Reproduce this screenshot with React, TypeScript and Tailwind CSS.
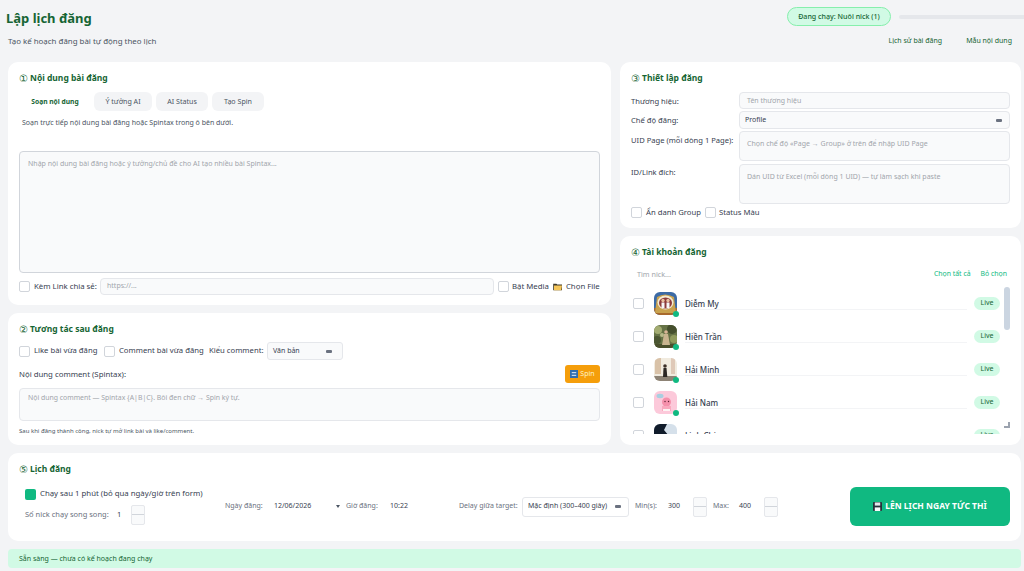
import type { ReactNode } from "react";

const font = { fontFamily: '"Noto Sans", "Open Sans", sans-serif' };

function Check({ className = "" }: { className?: string }) {
  return <span className={`block h-[11px] w-[11px] shrink-0 rounded-[2px] border border-[#d1d5db] bg-white ${className}`} />;
}

function Heading({ num, children }: { num: string; children: ReactNode }) {
  return (
    <h2 className="flex h-[12px] items-center text-[8.5px] leading-[12px] font-bold text-[#166534]">
      <span className="w-[11px] shrink-0 text-[10px] font-normal">{num}</span>
      {children}
    </h2>
  );
}

function SelectMark() {
  return <span className="block h-[3px] w-[6px] shrink-0 rounded-[1px] bg-[#6b7280]" />;
}

function Stepper({ className = "" }: { className?: string }) {
  return (
    <span className={`flex h-[20px] w-[14px] shrink-0 flex-col overflow-hidden rounded-[2px] border border-[#e5e7eb] bg-[#f9fafb] ${className}`}>
      <span className="flex-1 border-b border-[#d1d5db]" />
      <span className="flex-1" />
    </span>
  );
}

function Field({ label, children }: { label: string; children: ReactNode }) {
  return (
    <div className="flex">
      <span className="w-[108px] shrink-0 pt-[3px] text-[7.6px] leading-[12px] whitespace-nowrap text-[#374151]">{label}</span>
      {children}
    </div>
  );
}

function Avatar1() {
  return (
    <svg viewBox="0 0 23 23" className="h-full w-full">
      <rect width="23" height="23" fill="#3c6aa5" />
      <rect y="16" width="23" height="7" fill="#a8692c" />
      <path d="M1 21 3 5q8-5 17 0l2 16z" fill="#c8a24f" />
      <ellipse cx="11.5" cy="10.5" rx="8" ry="7" fill="#f4ead2" />
      <ellipse cx="11.5" cy="11" rx="6.5" ry="5.5" fill="#8d3a3a" />
      <circle cx="9" cy="8.5" r="1.7" fill="#e8bfa0" />
      <circle cx="14" cy="8.5" r="1.7" fill="#e8bfa0" />
      <rect x="7.5" y="10.5" width="3" height="5.5" fill="#f7f7f7" />
      <rect x="12.5" y="10.5" width="3" height="5.5" fill="#f7f7f7" />
    </svg>
  );
}

function Avatar2() {
  return (
    <svg viewBox="0 0 23 23" className="h-full w-full">
      <rect width="23" height="23" fill="#667346" />
      <circle cx="4" cy="5" r="4" fill="#a3ac72" />
      <circle cx="18" cy="4" r="5" fill="#454f2d" />
      <circle cx="20" cy="14" r="4" fill="#8f9a5c" />
      <circle cx="3" cy="15" r="4" fill="#4b5632" />
      <circle cx="8" cy="10" r="2" fill="#b7bb8a" />
      <rect y="19" width="23" height="4" fill="#4a4f2c" />
      <circle cx="12" cy="7" r="1.8" fill="#d9b596" />
      <path d="M10 9h4l2 11H8z" fill="#c9b48f" />
    </svg>
  );
}

function Avatar3() {
  return (
    <svg viewBox="0 0 23 23" className="h-full w-full">
      <rect width="23" height="23" fill="#f1ebdf" />
      <rect x="1" width="6" height="16" fill="#d9c2a8" />
      <rect x="17" width="4" height="16" fill="#dfc9b8" />
      <rect y="18" width="23" height="5" fill="#8d8375" />
      <circle cx="11" cy="8" r="1.8" fill="#3d3028" />
      <path d="M9.5 10h3l.8 9H9z" fill="#2b2623" />
    </svg>
  );
}

function Avatar4() {
  return (
    <svg viewBox="0 0 23 23" className="h-full w-full">
      <rect width="23" height="23" fill="#fcc9da" />
      <ellipse cx="6" cy="5" rx="3.5" ry="2.2" fill="#a9cfe0" />
      <circle cx="12.5" cy="11" r="4.5" fill="#f590ab" />
      <path d="M8 15h9v5H8z" fill="#f9a9be" />
      <path d="M9 18h7v2H9z" fill="#fdf3f3" />
      <circle cx="11" cy="10.5" r=".7" fill="#5b2333" />
      <circle cx="14.5" cy="10.5" r=".7" fill="#5b2333" />
    </svg>
  );
}

function Avatar5() {
  return (
    <svg viewBox="0 0 23 23" className="h-full w-full">
      <rect width="23" height="23" fill="#d5e0ea" />
      <path d="M0 0h13l-3 6 5 6H0z" fill="#111c2b" />
      <path d="M0 12h23v11H0z" fill="#33414f" />
    </svg>
  );
}

const accounts = [
  { name: "Diễm My", avatar: <Avatar1 /> },
  { name: "Hiền Trần", avatar: <Avatar2 /> },
  { name: "Hải Minh", avatar: <Avatar3 /> },
  { name: "Hải Nam", avatar: <Avatar4 /> },
  { name: "Linh Chi", avatar: <Avatar5 /> },
];

export default function App() {
  return (
    <div style={font} className="h-[571px] w-[1024px] overflow-hidden bg-[#f3f4f6] text-[#374151]">
      {/* Header */}
      <div className="flex h-[62px] flex-col">
        <div className="flex items-start justify-between pl-[6px]">
          <h1 className="pt-[8px] text-[13px] leading-[20px] font-bold text-[#166534]">Lập lịch đăng</h1>
          <div className="flex items-center pt-[7px]">
            <span className="flex h-[19px] w-[104px] items-center justify-center rounded-full border border-[#86efac] bg-[#d1fae5] text-[7.1px] font-medium text-[#166534]">
              Đang chạy: Nuôi nick (1)
            </span>
            <span className="ml-[8px] h-[4px] w-[125px] rounded-l-full bg-[#e5e7eb]" />
          </div>
        </div>
        <div className="mt-[7px] flex items-center justify-between pr-[12px] pl-[8px]">
          <span className="text-[7.9px] leading-[12px] text-[#4b5563]">Tạo kế hoạch đăng bài tự động theo lịch</span>
          <div className="flex gap-[24px] text-[7px] leading-[12px] text-[#166534]">
            <span>Lịch sử bài đăng</span>
            <span>Mẫu nội dung</span>
          </div>
        </div>
      </div>

      {/* Top columns */}
      <div className="flex gap-[9px] pl-[8px]">
        <div className="flex w-[603px] flex-col gap-[8px]">
          <section className="h-[243px] rounded-[10px] bg-white pt-[10px] pr-[11px] pl-[11px]">
            <Heading num="①">Nội dung bài đăng</Heading>
            <div className="mt-[8px] flex gap-[4px] pl-[3px] text-[7.1px] leading-[19px] text-[#4b5563]">
              <span className="w-[66px] rounded-[6px] bg-white text-center text-[6.7px] font-bold text-[#166534]">Soạn nội dung</span>
              <span className="ml-[2px] w-[58px] rounded-[6px] bg-[#f3f4f6] text-center">Ý tưởng AI</span>
              <span className="w-[52px] rounded-[6px] bg-[#f3f4f6] text-center">AI Status</span>
              <span className="w-[52px] rounded-[6px] bg-[#f3f4f6] text-center">Tạo Spin</span>
            </div>
            <p className="mt-[7px] pl-[3px] text-[7px] leading-[10px] text-[#4b5563]">Soạn trực tiếp nội dung bài đăng hoặc Spintax trong ô bên dưới.</p>
            <div className="mt-[23px] h-[122px] rounded-[4px] border border-[#d1d5db] bg-[#f9fafb] px-[8px] py-[6px] text-[7px] leading-[11px] text-[#a1a5ab]">
              Nhập nội dung bài đăng hoặc ý tưởng/chủ đề cho AI tạo nhiều bài Spintax...
            </div>
            <div className="mt-[5px] flex items-center text-[7.8px] text-[#374151]">
              <Check />
              <span className="ml-[4px] w-[66px] whitespace-nowrap">Kèm Link chia sẻ:</span>
              <span className="flex h-[17px] w-[394px] items-center rounded-[4px] border border-[#e5e7eb] bg-[#f9fafb] px-[6px] text-[7px] text-[#a1a5ab]">https://...</span>
              <Check className="ml-[4px]" />
              <span className="ml-[3px] whitespace-nowrap">Bật Media</span>
              <svg viewBox="0 0 12 10" className="ml-[4px] h-[8px] w-[10px] shrink-0">
                <path d="M0 1h4l1 1h6v7H0z" fill="#3f3a2a" />
                <path d="M1 3h10l-1 6H1z" fill="#f5c65a" />
              </svg>
              <span className="ml-[3px] whitespace-nowrap">Chọn File</span>
            </div>
          </section>

          <section className="h-[132px] rounded-[10px] bg-white pt-[10px] pr-[11px] pl-[11px]">
            <Heading num="②">Tương tác sau đăng</Heading>
            <div className="mt-[7px] flex h-[18px] items-center text-[7.7px] whitespace-nowrap">
              <Check />
              <span className="ml-[4px] w-[66px]">Like bài vừa đăng</span>
              <Check className="ml-[4px]" />
              <span className="ml-[4px] w-[86px]">Comment bài vừa đăng</span>
              <span className="ml-[4px] w-[55px]">Kiểu comment:</span>
              <span className="ml-[3px] flex h-[18px] w-[76px] items-center justify-between rounded-[3px] border border-[#e5e7eb] bg-[#f9fafb] pr-[10px] pl-[5px] text-[7px]">
                Văn bản
                <SelectMark />
              </span>
            </div>
            <div className="mt-[5px] flex h-[18px] items-center justify-between">
              <span className="pt-[2px] text-[7.8px] text-[#374151]">Nội dung comment (Spintax):</span>
              <span className="flex h-[18px] w-[35px] items-center justify-center gap-[2px] rounded-[3px] bg-[#f59e0b] text-[7px] text-[#fef3c7]">
                <svg viewBox="0 0 9 9" className="h-[8px] w-[8px]">
                  <rect width="9" height="9" fill="#2f6db0" />
                  <path d="M2 3h5M2 6h5" stroke="#fff" strokeWidth="1" />
                </svg>
                Spin
              </span>
            </div>
            <div className="mt-[5px] h-[33px] rounded-[4px] border border-[#e5e7eb] bg-[#f9fafb] px-[8px] py-[3px] text-[6.9px] leading-[11px] text-[#a1a5ab]">
              Nội dung comment — Spintax {"{A|B|C}"}. Bôi đen chữ → Spin ký tự.
            </div>
            <p className="mt-[6px] text-[6px] leading-[8px] text-[#4b5563]">Sau khi đăng thành công, nick tự mở link bài và like/comment.</p>
          </section>
        </div>

        <div className="flex w-[401px] flex-col gap-[8px]">
          <section className="h-[166px] rounded-[10px] bg-white pt-[10px] pr-[11px] pl-[11px]">
            <Heading num="③">Thiết lập đăng</Heading>
            <div className="mt-[8px] flex flex-col gap-[2px]">
              <Field label="Thương hiệu:">
                <span className="flex h-[17px] flex-1 items-center rounded-[4px] border border-[#e5e7eb] bg-[#f9fafb] px-[7px] pt-[1px] text-[7px] text-[#a1a5ab]">Tên thương hiệu</span>
              </Field>
              <Field label="Chế độ đăng:">
                <span className="flex h-[18px] flex-1 items-center justify-between rounded-[4px] border border-[#e5e7eb] bg-[#f9fafb] pt-[1px] pr-[7px] pl-[5px] text-[7px] text-[#374151]">
                  Profile
                  <SelectMark />
                </span>
              </Field>
              <Field label="UID Page (mỗi dòng 1 Page):">
                <span className="h-[30px] flex-1 rounded-[4px] border border-[#e5e7eb] bg-[#f9fafb] px-[7px] py-[7px] text-[7px] leading-[10px] text-[#a1a5ab]">Chọn chế độ «Page → Group» ở trên để nhập UID Page</span>
              </Field>
              <Field label="ID/Link đích:">
                <span className="mt-[1px] h-[40px] flex-1 rounded-[4px] border border-[#e5e7eb] bg-[#f9fafb] px-[7px] py-[7px] text-[7px] leading-[10px] text-[#a1a5ab]">Dán UID từ Excel (mỗi dòng 1 UID) — tự làm sạch khi paste</span>
              </Field>
            </div>
            <div className="mt-[3px] flex items-center text-[7.7px] whitespace-nowrap">
              <Check />
              <span className="ml-[4px] w-[56px]">Ẩn danh Group</span>
              <Check className="ml-[3px]" />
              <span className="ml-[3px]">Status Màu</span>
            </div>
          </section>

          <section className="h-[209px] rounded-[10px] bg-white pt-[10px] pr-[11px] pl-[11px]">
            <Heading num="④">Tài khoản đăng</Heading>
            <div className="mt-[10px] flex items-center justify-between pr-[3px] pl-[6px] text-[7.2px] leading-[12px]">
              <span className="text-[#a1a5ab]">Tìm nick...</span>
              <span className="flex gap-[10px] text-[6.9px] text-[#10b981]">
                <span>Chọn tất cả</span>
                <span>Bỏ chọn</span>
              </span>
            </div>
            <div className="relative mt-[7px] h-[147px] overflow-hidden pr-[10px]">
              {accounts.map((a) => (
                <div key={a.name} className="flex h-[33px] items-center pl-[2px]">
                  <Check />
                  <div className="relative ml-[10px] h-[23px] w-[23px] shrink-0">
                    <div className="h-full w-full overflow-hidden rounded-[6px]">{a.avatar}</div>
                    <span className="absolute -right-[2px] -bottom-[2px] h-[6px] w-[6px] rounded-full bg-[#10b981]" />
                  </div>
                  <span className="mt-[1px] mr-[7px] ml-[8px] w-[16px] flex-1 border-b border-[#f3f4f6] text-[8px] leading-[10px] font-medium text-[#374151]">{a.name}</span>
                  <span className="flex h-[13px] w-[26px] items-center justify-center rounded-full bg-[#d1fae5] text-[7px] text-[#166534]">Live</span>
                </div>
              ))}
              <span className="absolute top-0 right-0 h-[43px] w-[6px] rounded-full bg-[#cbd5e1]" />
              <span className="absolute right-0 bottom-[6px] h-[6px] w-[6px] border-r-2 border-b-2 border-[#9ca3af]" />
            </div>
          </section>
        </div>
      </div>

      {/* Schedule */}
      <section className="mt-[8px] ml-[8px] h-[88px] w-[1013px] rounded-[10px] bg-white pt-[10px] pr-[11px] pl-[11px]">
        <Heading num="⑤">Lịch đăng</Heading>
        <div className="mt-[12px] flex h-[39px] items-center">
          <div className="w-[206px] shrink-0 pl-[6px]">
            <div className="flex items-center">
              <span className="h-[11px] w-[11px] rounded-[2px] bg-[#10b981]" />
              <span className="ml-[4px] text-[7.8px] whitespace-nowrap">Chạy sau 1 phút (bỏ qua ngày/giờ trên form)</span>
            </div>
            <div className="mt-[5px] flex items-center text-[7.5px] text-[#6b7280]">
              <span className="w-[84px] whitespace-nowrap">Số nick chạy song song:</span>
              <span className="ml-[8px] w-[14px] text-[#374151]">1</span>
              <Stepper />
            </div>
          </div>
          <div className="flex items-center text-[7px] whitespace-nowrap text-[#6b7280]">
            <span className="w-[38px]">Ngày đăng:</span>
            <span className="ml-[11px] w-[62px] text-[#374151]">12/06/2026</span>
            <span className="h-0 w-0 border-x-[2px] border-t-[3px] border-x-transparent border-t-[#4b5563]" />
            <span className="ml-[6px] w-[33px]">Giờ đăng:</span>
            <span className="ml-[11px] w-[20px] text-[#374151]">10:22</span>
            <span className="ml-[49px] w-[59px]">Delay giữa target:</span>
            <span className="ml-[4px] flex h-[20px] w-[107px] items-center justify-between rounded-[3px] border border-[#e5e7eb] bg-white pr-[7px] pl-[5px] text-[#374151]">
              Mặc định (300–400 giây)
              <SelectMark />
            </span>
            <span className="ml-[6px] w-[22px]">Min(s):</span>
            <span className="ml-[11px] w-[25px] text-[#374151]">300</span>
            <Stepper />
            <span className="ml-[6px] w-[16px]">Max:</span>
            <span className="ml-[10px] w-[25px] text-[#374151]">400</span>
            <Stepper />
          </div>
          <span className="ml-auto flex h-[39px] w-[160px] items-center justify-center gap-[3px] rounded-[6px] bg-[#10b981] text-[8.5px] font-bold text-white">
            <svg viewBox="0 0 10 10" className="h-[9px] w-[9px]">
              <rect width="10" height="10" rx="1" fill="#27303a" />
              <rect x="2" y="0.5" width="6" height="3.5" fill="#e5e7eb" />
              <rect x="2" y="6" width="6" height="4" fill="#f9fafb" />
            </svg>
            LÊN LỊCH NGAY TỨC THÌ
          </span>
        </div>
      </section>

      {/* Status bar */}
      <div className="mt-[8px] ml-[8px] flex h-[19px] w-[1013px] items-center rounded-[4px] bg-[#d1fae5] pt-[2px] pl-[11px] text-[7px] text-[#166534]">
        Sẵn sàng — chưa có kế hoạch đang chạy
      </div>
    </div>
  );
}
